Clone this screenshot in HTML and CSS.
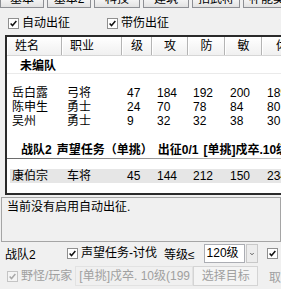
FILE: index.html
```html
<!DOCTYPE html>
<html lang="zh">
<head>
    <meta charset="UTF-8">
    <title>出征</title>
    <link rel="stylesheet" href="styles.css">
</head>
<body>
    <div class="tabs">
        <div class="tab t1"><span>基本</span></div>
        <div class="tab t2"><span>基本2</span></div>
        <div class="tab t3"><span>科技</span></div>
        <div class="tab t4"><span>建筑</span></div>
        <div class="tab t5"><span>拍武将</span></div>
        <div class="tab t6"><span>补能类</span></div>
    </div>

    <div class="opts">
        <label class="opt">
            <span class="box"><svg viewBox="0 0 11 11"><path d="M2 5.5 L4.3 8 L9 2.5"/></svg></span>
            自动出征
        </label>
        <label class="opt opt-second">
            <span class="box"><svg viewBox="0 0 11 11"><path d="M2 5.5 L4.3 8 L9 2.5"/></svg></span>
            带伤出征
        </label>
    </div>

    <div class="list">
        <div class="head">
            <span class="left">姓名</span>
            <span class="left">职业</span>
            <span>级</span>
            <span>攻</span>
            <span>防</span>
            <span>敏</span>
            <span>体</span>
        </div>

        <div class="grp">未编队</div>
        <div class="rows">
            <div class="row"><span>岳白露</span><span>弓将</span><span>47</span><span>184</span><span>192</span><span>200</span><span>189</span></div>
            <div class="row"><span>陈申生</span><span>勇士</span><span>24</span><span>70</span><span>78</span><span>84</span><span>80</span></div>
            <div class="row"><span>吴州</span><span>勇士</span><span>9</span><span>32</span><span>32</span><span>38</span><span>30</span></div>
        </div>

        <div class="grp grp-active">
            <span class="tok">战队2</span><span class="tok">声望任务（单挑）</span><span class="tok">出征0/1</span><span class="tok">[单挑]戍卒.10级</span>
        </div>
        <div class="rows rows-tight">
            <div class="row sel"><span>康伯宗</span><span>车将</span><span>45</span><span>144</span><span>212</span><span>150</span><span>234</span></div>
        </div>
    </div>

    <div class="status">当前没有启用自动出征.</div>

    <div class="team">
        <span class="team-name">战队2</span>
        <label class="opt small">
            <span class="box"><svg viewBox="0 0 11 11"><path d="M2 5.5 L4.3 8 L9 2.5"/></svg></span>
            声望任务-讨伐
        </label>
        <span class="lvl">等级≤</span>
        <div class="combo">
            <span class="combo-val">120级</span>
            <span class="combo-btn"><svg viewBox="0 0 12 19"><path d="M4 9 L6 11 L8 9"/></svg></span>
        </div>
        <span class="box box-end"><svg viewBox="0 0 11 11"><path d="M2 5.5 L4.3 8 L9 2.5"/></svg></span>
    </div>

    <div class="targets">
        <label class="opt off">
            <span class="box"><svg viewBox="0 0 11 11"><path d="M2 5.5 L4.3 8 L9 2.5"/></svg></span>
            野怪/玩家
        </label>
        <div class="field">[单挑]戍卒. 10级(199</div>
        <button class="pick">选择目标</button>
        <span class="more">取</span>
    </div>
</body>
</html>
```

FILE: styles.css
```css
* {
    margin: 0;
    padding: 0;
    box-sizing: border-box;
}

body {
    width: 281px;
    height: 289px;
    overflow: hidden;
    background-color: #f0f0f0;
    color: #000;
    font-family: "Liberation Sans", "Noto Sans CJK SC", sans-serif;
    font-size: 12px;
}

/* tab strip, only its bottom is visible */
.tabs {
    display: flex;
    gap: 3px;
    height: 8px;
    overflow: hidden;
}

.tab {
    flex: none;
    height: 8px;
    border: 1px solid #8d8f94;
    border-top: none;
    background: linear-gradient(#f3f3f3, #e2e2e2);
    text-align: center;
    line-height: 12px;
    white-space: nowrap;
}

.tab span {
    display: block;
    margin-top: -7px;
}

.t1, .t2 { width: 44px; }
.t3, .t4 { width: 46px; }
.t5, .t6 { width: 48px; }

/* checkboxes */
.opts {
    display: flex;
    padding: 8px 0 0 8px;
}

.opt {
    display: flex;
    align-items: center;
    gap: 3px;
    line-height: 14px;
    white-space: nowrap;
}

.opt-second {
    margin-left: 37px;
}

.box {
    flex: none;
    width: 11px;
    height: 11px;
    border: 1px solid #8f8f8f;
    background: #fff;
    display: flex;
}

.box svg {
    width: 9px;
    height: 9px;
    fill: none;
    stroke: #111;
    stroke-width: 1.8;
}

/* list view */
.list {
    margin: 5px 0 0 5px;
    width: 290px;
    height: 160px;
    border: 2px solid #2a2a2a;
    border-right: none;
    background: #fff;
    overflow: hidden;
}

.head,
.row {
    display: grid;
    grid-template-columns: 55px 60px 30px 36px 37px 37px 40px;
}

.head {
    height: 19px;
    background: linear-gradient(#ffffff, #f0f0f0);
    border-bottom: 1px solid #d6d6d6;
}

.head span {
    line-height: 18px;
    text-align: center;
    border-right: 1px solid #b4b4b4;
    border-left: 1px solid #fff;
}

.head span.left {
    text-align: left;
    padding-left: 7px;
}

.grp {
    padding: 3px 0 0 13px;
    line-height: 14px;
    font-weight: bold;
    white-space: nowrap;
    border-bottom: 1px solid #eaeaea;
}

.grp-active {
    display: flex;
    gap: 5px;
    padding-top: 15px;
    padding-left: 14px;
    line-height: 15px;
    border-bottom: none;
    background: linear-gradient(to right, #6a6a6a, #c8c8c8) left bottom / 100% 1px no-repeat;
    padding-bottom: 1px;
}

.tok {
    flex: none;
}

.rows {
    margin-top: 12px;
}

.rows-tight {
    margin-top: 10px;
}

.row {
    line-height: 14px;
}

.row span {
    padding-left: 5px;
    white-space: nowrap;
}

.row.sel {
    background: linear-gradient(to right, transparent 3px, #e6e6e6 3px);
}

/* status box */
.status {
    margin: 2px 0 0 1px;
    height: 45px;
    border: 1px solid #a5a5a5;
    padding: 2px 0 0 5px;
    line-height: 14px;
}

/* team row */
.team {
    display: flex;
    align-items: center;
    height: 20px;
    margin-top: 1px;
    padding-left: 5px;
    white-space: nowrap;
}

.team-name {
    width: 62px;
}

.lvl {
    margin-left: 7px;
}

.combo {
    display: flex;
    margin-left: 9px;
    height: 19px;
}

.combo-val {
    width: 41px;
    border: 1px solid #abadb3;
    background: #fff;
    line-height: 17px;
    padding-left: 2px;
}

.combo-btn {
    width: 12px;
    margin-left: 1px;
    border: 1px solid #c8c8c8;
    background: #ececec;
    display: flex;
}

.combo-btn svg {
    width: 10px;
    height: 17px;
    fill: none;
    stroke: #555;
    stroke-width: 1.2;
}

.box-end {
    margin-left: 9px;
}

/* target row */
.targets {
    display: flex;
    align-items: center;
    height: 26px;
    padding-left: 7px;
    white-space: nowrap;
    color: #a0a0a0;
}

.off .box {
    border-color: #c4c4c4;
    background: #f4f4f4;
}

.off .box svg {
    stroke: #a8a8a8;
}

.field {
    margin-left: 3px;
    width: 119px;
    height: 20px;
    line-height: 18px;
    padding-left: 3px;
    border: 1px solid #e2e2e2;
    overflow: hidden;
}

.pick {
    width: 65px;
    height: 20px;
    border: 1px solid #d4d4d4;
    background: #f4f4f4;
    color: #a0a0a0;
    font: inherit;
    line-height: 18px;
}

.more {
    margin-left: 11px;
}
```
